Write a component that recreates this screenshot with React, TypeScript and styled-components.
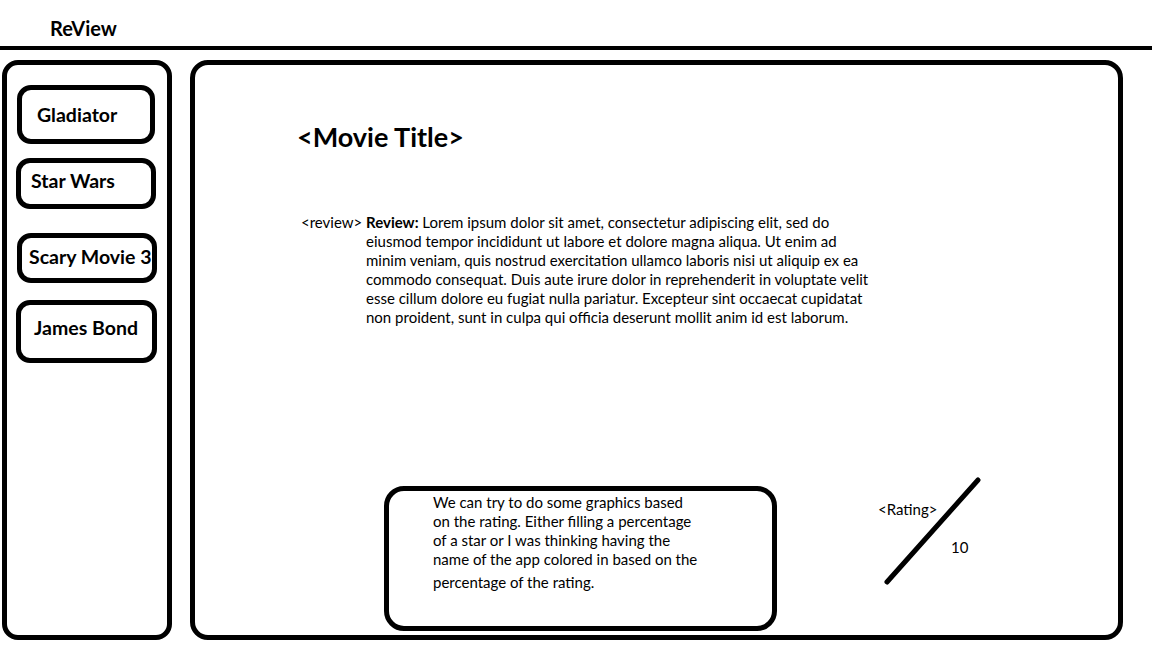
import React from "react";
import styled, { createGlobalStyle } from "styled-components";

const Global = createGlobalStyle`
  html, body { margin: 0; padding: 0; background: #fff; }
  body { font-family: Lato, "Open Sans", sans-serif; color: #000; }
  * { box-sizing: border-box; }
`;

const Page = styled.div`
  width: 1152px;
  height: 648px;
  overflow: hidden;
  background: #fff;
`;

const Header = styled.header`
  height: 50px;
  padding: 16px 0 0 50px;
  border-bottom: 4px solid #000;
  font-weight: 700;
  font-size: 20px;
  line-height: 24px;
`;

const Body = styled.div`
  display: flex;
  gap: 18px;
  padding: 10px 29px 0 2px;
`;

const Sidebar = styled.nav`
  width: 170px;
  height: 580px;
  border: 5px solid #000;
  border-radius: 16px;
  padding: 20px 0 0 7px;
  display: flex;
  flex-direction: column;
  align-items: flex-start;
`;

const MovieButton = styled.div<{ $w: number; $h: number; $mt: number; $dx: number; $pl: number; $pb: number }>`
  width: ${(p) => p.$w}px;
  height: ${(p) => p.$h}px;
  margin-top: ${(p) => p.$mt}px;
  margin-left: ${(p) => p.$dx}px;
  padding: 0 0 ${(p) => p.$pb}px ${(p) => p.$pl}px;
  border: 5px solid #000;
  border-radius: 14px;
  display: flex;
  align-items: center;
  font-weight: 700;
  font-size: 19.5px;
  white-space: nowrap;
`;

const Main = styled.main`
  width: 933px;
  height: 580px;
  border: 5px solid #000;
  border-radius: 18px;
  display: flex;
  flex-direction: column;
  padding: 0 0 4px 0;
`;

const Title = styled.h1`
  margin: 56px 0 0 102px;
  font-size: 27px;
  font-weight: 700;
  line-height: 32px;
`;

const ReviewRow = styled.section`
  display: flex;
  margin: 60px 0 0 106px;
  font-size: 15px;
  line-height: 19px;
`;

const ReviewTag = styled.span`
  width: 65px;
  flex: none;
`;

const ReviewText = styled.p`
  margin: 0;
  white-space: nowrap;
  strong { font-weight: 700; }
`;

const BottomRow = styled.div`
  margin-top: auto;
  display: flex;
  align-items: flex-start;
  padding-left: 189px;
`;

const NoteBox = styled.div`
  margin-top: 10px;
  width: 393px;
  height: 145px;
  border: 5px solid #000;
  border-radius: 20px;
  padding: 2px 0 0 44px;
  font-size: 15px;
  line-height: 19px;
  white-space: nowrap;
`;

const LastLine = styled.div`
  margin-top: 4px;
`;

const Rating = styled.div`
  position: relative;
  margin-left: 101px;
  width: 107px;
  height: 110px;
  font-size: 15px;
`;

const Slash = styled.svg`
  position: absolute;
  inset: 0;
`;

const RatingLabel = styled.span<{ $x: number; $y: number }>`
  position: absolute;
  left: ${(p) => p.$x}px;
  top: ${(p) => p.$y}px;
  line-height: 18px;
  white-space: nowrap;
`;

const movies = [
  { name: "Gladiator", w: 138, h: 59, mt: 0, dx: 3, pl: 15, pb: 0 },
  { name: "Star Wars", w: 140, h: 51, mt: 14, dx: 2, pl: 10, pb: 6 },
  { name: "Scary Movie 3", w: 140, h: 50, mt: 24, dx: 3, pl: 7, pb: 4 },
  { name: "James Bond", w: 141, h: 63, mt: 17, dx: 2, pl: 13, pb: 8 },
];

export default function App() {
  return (
    <Page>
      <Global />
      <Header>ReView</Header>
      <Body>
        <Sidebar>
          {movies.map((m) => (
            <MovieButton key={m.name} $w={m.w} $h={m.h} $mt={m.mt} $dx={m.dx} $pl={m.pl} $pb={m.pb}>
              {m.name}
            </MovieButton>
          ))}
        </Sidebar>
        <Main>
          <Title>&lt;Movie Title&gt;</Title>
          <ReviewRow>
            <ReviewTag>&lt;review&gt;</ReviewTag>
            <ReviewText>
              <strong>Review:</strong> Lorem ipsum dolor sit amet, consectetur adipiscing elit, sed do
              <br />
              eiusmod tempor incididunt ut labore et dolore magna aliqua. Ut enim ad
              <br />
              minim veniam, quis nostrud exercitation ullamco laboris nisi ut aliquip ex ea
              <br />
              commodo consequat. Duis aute irure dolor in reprehenderit in voluptate velit
              <br />
              esse cillum dolore eu fugiat nulla pariatur. Excepteur sint occaecat cupidatat
              <br />
              non proident, sunt in culpa qui officia deserunt mollit anim id est laborum.
            </ReviewText>
          </ReviewRow>
          <BottomRow>
            <NoteBox>
              <div>We can try to do some graphics based</div>
              <div>on the rating. Either filling a percentage</div>
              <div>of a star or I was thinking having the</div>
              <div>name of the app colored in based on the</div>
              <LastLine>percentage of the rating.</LastLine>
            </NoteBox>
            <Rating>
              <Slash width="107" height="110" viewBox="0 0 107 110">
                <line x1="100" y1="4" x2="9" y2="106" stroke="#000" strokeWidth="5" strokeLinecap="round" />
              </Slash>
              <RatingLabel $x={0} $y={24}>&lt;Rating&gt;</RatingLabel>
              <RatingLabel $x={73} $y={62}>10</RatingLabel>
            </Rating>
          </BottomRow>
        </Main>
      </Body>
    </Page>
  );
}
